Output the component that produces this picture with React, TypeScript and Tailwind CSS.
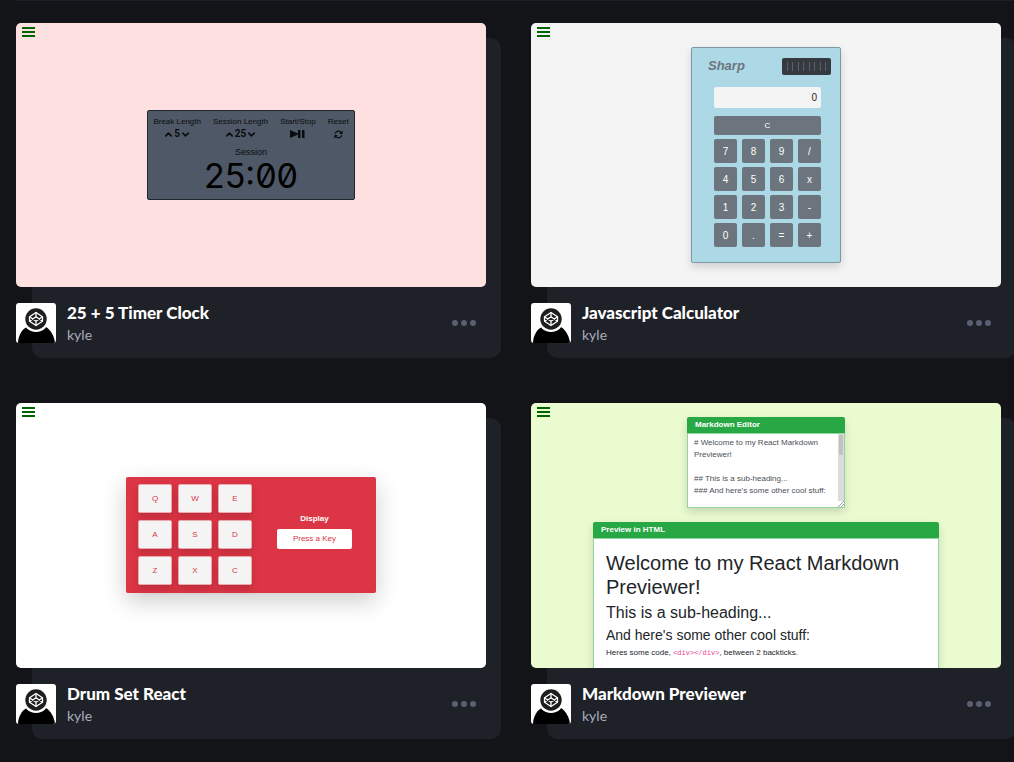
import React from "react";
import { FiChevronUp, FiChevronDown } from "react-icons/fi";
import { FaArrowsRotate } from "react-icons/fa6";

const sans = "font-['Liberation_Sans',Arial,sans-serif]";

function MenuButton() {
  return (
    <button type="button" aria-label="Open menu" className="absolute top-1 left-1.5 flex w-[13px] flex-col gap-0.5">
      <span className="h-0.5 w-full bg-[#006400]" />
      <span className="h-0.5 w-full bg-[#006400]" />
      <span className="h-0.5 w-full bg-[#006400]" />
    </button>
  );
}

function Stepper({ label, value }: { label: string; value: string }) {
  return (
    <div className="flex flex-col items-center">
      <span>{label}</span>
      <div className="flex h-3 items-center">
        <button type="button" aria-label={`Increase ${label}`}>
          <FiChevronUp className="size-[11px]" strokeWidth={3.5} />
        </button>
        <span className="font-['Roboto',sans-serif] text-[10px] leading-3 font-bold">{value}</span>
        <button type="button" aria-label={`Decrease ${label}`}>
          <FiChevronDown className="size-[11px]" strokeWidth={3.5} />
        </button>
      </div>
    </div>
  );
}

function TimerPreview() {
  return (
    <div className="flex h-full items-center justify-center bg-[#ffe0e0]">
      <div className="flex h-[90px] w-[208px] flex-col items-center rounded-xs border border-[#22272d] bg-[#4e5866] pt-[5px] text-[8px] leading-3 text-[#0b0c0e]">
        <div className="flex gap-3">
          <Stepper label="Break Length" value="5" />
          <Stepper label="Session Length" value="25" />
          <div className="flex flex-col items-center">
            <span>Start/Stop</span>
            <button type="button" aria-label="Start or stop" className="flex h-3 items-center">
              <svg viewBox="0 0 15 8" className="h-2 w-[15px]" fill="currentColor">
                <path d="M0 0 8 3.5V0H10.5V8H8V4.5L0 8zM12 0h2.5v8H12z" />
              </svg>
            </button>
          </div>
          <div className="flex flex-col items-center">
            <span>Reset</span>
            <button type="button" aria-label="Reset" className="flex h-3 items-center">
              <FaArrowsRotate className="size-[9px]" />
            </button>
          </div>
        </div>
        <p className="mt-1.5 text-[9px] leading-3">Session</p>
        <p className="font-['Inter',sans-serif] text-[34px] leading-9 text-black slashed-zero">25:00</p>
      </div>
    </div>
  );
}

const calcKeys = ["7", "8", "9", "/", "4", "5", "6", "x", "1", "2", "3", "-", "0", ".", "=", "+"];

function CalculatorPreview() {
  return (
    <div className="flex h-full items-center justify-center bg-[#f4f4f4]">
      <div className="flex h-[216px] w-[150px] flex-col rounded-xs border border-[#8098a5] bg-[#add8e6] pr-[19px] pl-[22px] shadow-[0_4px_8px_rgba(0,0,0,0.15)]">
        <div className="-mr-2.5 -ml-1.5 mt-2 flex items-center justify-between">
          <h3 className="text-[13px] leading-5 font-bold text-[#6c757d] italic">Sharp</h3>
          <div className="flex h-[17px] w-[49px] items-center justify-between rounded-xs bg-[#343a40] px-[5px]">
            {Array.from({ length: 8 }, (_, i) => (
              <span key={i} className="h-[9px] w-px bg-[#59626b]" />
            ))}
          </div>
        </div>
        <input
          aria-label="Result"
          readOnly
          value="0"
          className="mt-[11px] h-[21px] w-full rounded-xs bg-[#f4f4f4] pr-1 text-right text-[10px] text-[#212529]"
        />
        <button type="button" className="mt-2 h-[19px] rounded-xs bg-[#6c757d] text-[8px] text-white">
          C
        </button>
        <div className="mt-1 grid grid-cols-4 gap-x-[5px] gap-y-1">
          {calcKeys.map((k) => (
            <button key={k} type="button" className="h-6 rounded-xs bg-[#6c757d] text-[10px] text-white">
              {k}
            </button>
          ))}
        </div>
      </div>
    </div>
  );
}

const drumKeys = ["Q", "W", "E", "A", "S", "D", "Z", "X", "C"];

function DrumPreview() {
  return (
    <div className="flex h-full items-center justify-center bg-white pb-0.5">
      <div className="flex h-[116px] w-[250px] items-center rounded-xs bg-[#dc3545] pr-6 pl-3 shadow-[0_8px_24px_rgba(0,0,0,0.2)]">
        <div className="grid grid-cols-3 gap-x-1.5 gap-y-[7px]">
          {drumKeys.map((k) => (
            <button
              key={k}
              type="button"
              className="h-[29px] w-[34px] rounded-xs border border-[#eaa9af] bg-[#f4f4f4] text-[8px] text-[#dc3545] shadow-[0_4px_8px_rgba(0,0,0,0.15)]"
            >
              {k}
            </button>
          ))}
        </div>
        <div className="ml-auto w-[75px] pb-2 text-center text-[8px]">
          <p className="mb-1 leading-3 font-bold text-white">Display</p>
          <p className="rounded-xs bg-white leading-5 text-[#dc3545]">Press a Key</p>
        </div>
      </div>
    </div>
  );
}

const source = `# Welcome to my React Markdown Previewer!

## This is a sub-heading...
### And here's some other cool stuff:`;

function MarkdownPreview() {
  return (
    <div className="flex h-full flex-col items-center bg-[#ebfbd0] pt-3.5 text-[#212529]">
      <div className="h-[91px] w-[158px] shrink-0 rounded-xs shadow-[0_4px_8px_rgba(0,0,0,0.15)]">
        <label htmlFor="editor" className="block h-4 rounded-t-xs bg-[#28a745] pl-2 text-[8px] leading-4 font-bold text-white">
          Markdown Editor
        </label>
        <div className="flex h-[75px] border border-[#94d3a2] bg-white">
          <textarea
            id="editor"
            defaultValue={source}
            className="block h-full min-w-0 flex-1 resize-none overflow-hidden pt-[3px] pl-1.5 text-[8px] leading-3 text-[#495057]"
          />
          <div className="flex w-1.5 flex-col justify-between bg-[#dcdcdc]">
            <span className="mx-px mt-px h-5 bg-[#c1c1c1]" />
            <svg viewBox="0 0 6 6" className="size-1.5 bg-white" stroke="#999">
              <path d="M0 6 6 0M3 6 6 3" />
            </svg>
          </div>
        </div>
      </div>
      <div className="mt-3.5 w-[346px] shrink-0 rounded-xs shadow-[0_4px_8px_rgba(0,0,0,0.15)]">
        <h3 className="h-4 rounded-t-xs bg-[#28a745] pl-2 text-[8px] leading-4 font-bold text-white">Preview in HTML</h3>
        <div className="h-48 border border-[#94d3a2] bg-white px-3 pt-3">
          <h1 className="text-[20px] leading-6">Welcome to my React Markdown Previewer!</h1>
          <h2 className="mt-1 text-[16px] leading-5">This is a sub-heading...</h2>
          <h3 className="mt-1 text-[14px] leading-4">And here's some other cool stuff:</h3>
          <p className="mt-1 text-[8px] leading-3">
            Heres some code,{" "}
            <code className="font-['Liberation_Mono',monospace] text-[7px] text-[#e83e8c]">{"<div></div>"}</code>, between 2
            backticks.
          </p>
        </div>
      </div>
    </div>
  );
}

function Avatar() {
  return (
    <svg viewBox="0 0 40 40" className="size-10 shrink-0 rounded-[3px] bg-white" role="img" aria-label="kyle">
      <path d="M2 40C2 33 6 26 11 24h19c5 3 8.500 10 9 16z" fill="#000" />
      <circle cx="20" cy="16" r="13" fill="#fff" />
      <circle cx="20" cy="16" r="10.7" fill="#1e1e1f" />
      <g fill="none" stroke="#fff" strokeWidth="1.3" strokeLinejoin="round">
        <path d="M20 9.500 26.500 13.800v4.400L20 22.500l-6.500-4.300v-4.400z" />
        <path d="M13.500 13.800 20 18.200l6.500-4.400M13.500 18.200 20 13.800l6.500 4.400M20 9.500v4.300M20 18.200v4.300" />
      </g>
    </svg>
  );
}

function PenCard({ title, children }: { title: string; children: React.ReactNode }) {
  return (
    <article className="grid">
      <div className="col-start-1 row-start-1 mt-[15px] ml-4 rounded-[10px] bg-[#1f2128]" />
      <div className="col-start-1 row-start-1">
        <div className={`relative mr-[15px] aspect-video overflow-hidden rounded-[5px] ${sans}`}>
          {children}
          <MenuButton />
        </div>
        <div className="flex pt-4 pr-[25px] pb-[11px]">
          <Avatar />
          <div className="ml-[11px] flex-1">
            <h2 className="text-[17px] leading-5 font-black text-white">
              <a href="#pen">{title}</a>
            </h2>
            <a href="#kyle" className="block text-sm leading-6 text-[#a9adbd]">
              kyle
            </a>
          </div>
          <button type="button" aria-label="Pen actions" className="flex h-10 items-center gap-[3px]">
            <span className="size-1.5 rounded-full bg-[#5a5f73]" />
            <span className="size-1.5 rounded-full bg-[#5a5f73]" />
            <span className="size-1.5 rounded-full bg-[#5a5f73]" />
          </button>
        </div>
      </div>
    </article>
  );
}

export default function App() {
  return (
    <div className="min-h-screen overflow-hidden bg-[#131417] pl-4 font-['Lato',sans-serif]">
      <hr className="border-t border-[#1e1f26]" />
      <main className="mt-[22px] -mr-0.5 grid grid-cols-2 gap-x-[30px] gap-y-[45px]">
        <PenCard title="25 + 5 Timer Clock">
          <TimerPreview />
        </PenCard>
        <PenCard title="Javascript Calculator">
          <CalculatorPreview />
        </PenCard>
        <PenCard title="Drum Set React">
          <DrumPreview />
        </PenCard>
        <PenCard title="Markdown Previewer">
          <MarkdownPreview />
        </PenCard>
      </main>
    </div>
  );
}
